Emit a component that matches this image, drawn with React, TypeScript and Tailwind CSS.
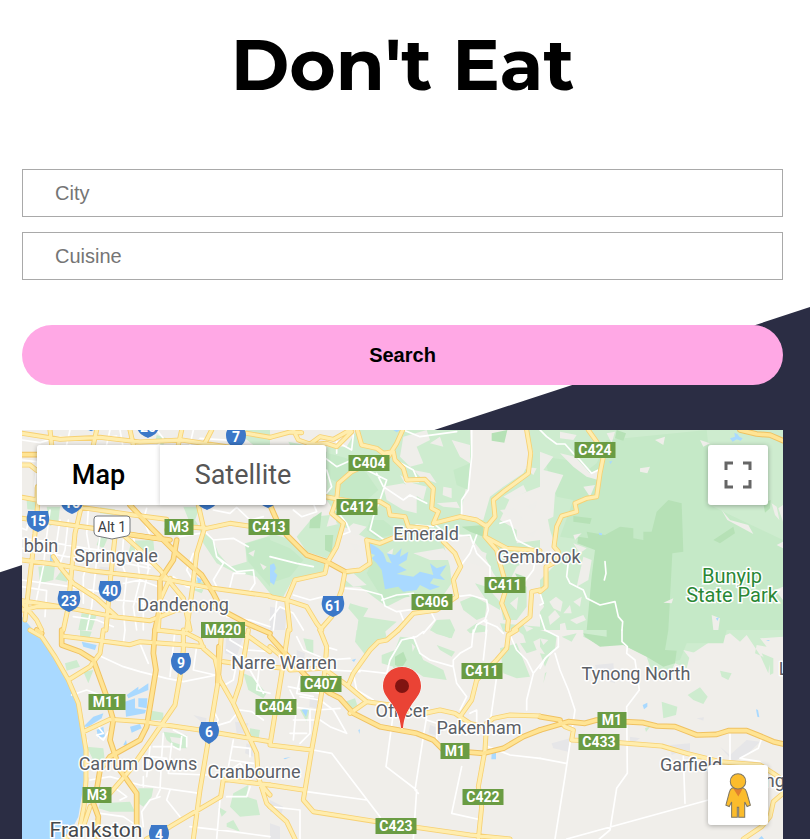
import React from "react";

/* Each sheet covers a 270px wide piece of the map, drawn at three units per pixel. */
type Sheet = {
  x: number;
  y: number;
  park: string[];
  wood: string[];
  dense: string[];
  gaps: string[];
  urban: string[];
  water: string[];
  lanes: string[];
  roads: string[];
  highways: string[];
};

const sheets: Sheet[] = [
  {
    x: 0,
    y: 420,
    park: [
      "M720 30L810 30L810 75L760 75L735 55Z",
      "M600 330L640 360L655 400L690 440L740 425L735 370L800 350L810 345L810 520L770 470L700 455L650 430L610 370Z",
      "M550 260L600 260L585 300L610 340L570 310Z",
      "M140 260L180 260L175 305L150 318Z",
      "M115 440L165 435L160 480L120 490Z",
      "M185 450L215 460L200 485L165 478Z",
      "M395 362L460 360L465 415L420 420L385 400Z",
      "M245 580L290 585L275 630L235 630Z",
      "M300 262L345 268L340 285L300 280Z",
      "M80 240L108 245L105 270L82 268Z",
      "M470 45L500 55L490 74L465 70Z",
      "M590 480L620 490L605 520L580 510Z",
      "M300 345L325 350L310 385L290 375Z",
    ],
    wood: ["M735 372L800 352L810 352L810 500L775 460L745 425Z"],
    dense: [],
    gaps: ["M745 400L765 390L760 410Z", "M780 430L800 440L790 450Z"],
    urban: ["M300 440L350 445L345 470L290 465Z", "M370 300L390 320L380 335Z"],
    water: ["M66 590L100 630L66 630Z", "M150 400L158 405L158 430L150 425Z", "M590 470L606 480L596 496Z", "M262 30L285 30L275 34Z"],
    lanes: [
      "M66 120L110 125L105 200",
      "M66 355L140 365L260 385L370 400",
      "M66 385L200 410L330 420L450 445",
      "M66 480L210 500L300 515",
      "M66 500L140 512L135 590",
      "M150 270L140 350L130 440L105 560",
      "M180 300L165 400L185 450",
      "M205 300L195 390L180 430L210 470",
      "M265 270L260 340L270 400L250 470L250 550",
      "M300 350L290 420L275 560L260 630",
      "M370 360L365 430L380 470L370 560L375 630",
      "M400 350L410 400L420 480L400 560L410 630",
      "M440 380L445 450L430 520L430 630",
      "M300 400L360 410L430 430L470 440",
      "M370 490L420 480L475 500",
      "M350 540L410 545L470 560",
      "M500 300L520 330L540 350L600 340",
      "M610 330L640 360L650 410L690 440L710 455L760 450L765 490L745 520",
      "M640 360L700 355L745 380",
      "M650 410L670 430L640 480L650 500",
      "M690 500L700 460L735 460",
      "M580 400L560 450L590 500",
      "M640 270L690 280L710 262L750 300L790 290",
      "M66 60L120 68L180 50L260 60L350 48",
      "M210 30L200 74M330 30L320 74M360 30L368 74",
      "M470 30L490 55L475 74",
      "M580 30L570 74M600 55L680 60",
      "M680 590L750 600L810 620",
      "M90 280L80 330L66 325",
      "M220 590L290 600L340 620",
      "M520 470L560 500L610 505",
      "M440 265L430 300L450 345",
    ],
    roads: [
      "M66 40L180 58L300 52L420 66L545 60L690 82",
      "M150 30L155 75M290 30L280 75M390 30L400 75",
      "M545 30L535 75M635 30L612 75M740 40L810 52",
      "M66 135L90 135L111 152",
      "M66 232L111 240L112 200",
      "M118 200L105 340L90 470L75 600",
      "M245 255L225 340L215 450L205 560L190 630",
      "M345 350L332 470L318 630",
      "M66 295L280 325L500 360",
      "M240 262L400 285L500 298",
      "M66 420L180 435L270 452L500 478L640 505L810 528",
      "M66 542L230 568L340 590L450 602L530 570L640 560",
      "M160 410L180 440L220 490L290 535L350 590",
      "M345 345L370 345L420 390L480 450L550 535L570 630",
      "M595 255L612 330L590 400L578 500L560 630",
      "M500 330L560 320L620 325L690 310L745 318",
      "M66 548L110 600L125 630",
      "M66 570L110 560L180 560",
      "M510 475L480 540L475 630",
    ],
    highways: [
      "M66 104L111 104",
      "M390 255L455 325L530 400L605 465L640 520L665 570L740 610L810 640",
      "M530 360L520 420L480 480L480 560L465 630",
      "M395 345L510 360",
    ],
  },
  {
    x: 270,
    y: 420,
    park: [
      "M55 65L130 80L230 80L260 30L600 30L605 120L570 290L640 300L660 230L700 200L760 160L790 100L770 30L810 30L810 200L720 235L690 300L740 330L740 370L810 360L810 400L740 440L720 480L770 500L770 560L740 600L700 600L690 550L700 500L670 460L640 400L600 350L560 340L520 370L540 440L545 490L510 540L430 520L350 560L270 500L225 500L225 460L290 440L300 360L200 310L190 270L170 240L170 75L60 75Z",
      "M0 340L50 355L105 410L165 430L160 455L70 475L40 530L0 525Z",
      "M170 320L215 310L195 380L170 415L110 395L80 350L130 290L180 285Z",
      "M130 90L200 100L240 160L200 190L170 180Z",
      "M240 550L275 560L295 565L280 590L380 605L340 640L260 638L265 600L235 565Z",
      "M500 600L540 598L555 630L540 655L480 630Z",
      "M570 545L610 528L650 550L645 590L620 600L580 570Z",
      "M615 490L650 500L690 545L690 570L655 550Z",
    ],
    wood: [
      "M175 100L230 115L290 160L325 210L290 240L225 240L200 220L205 190L170 170Z",
      "M0 360L60 385L100 420L60 470L0 490Z",
      "M300 300L340 300L390 340L320 355L290 330Z",
      "M550 150L600 130L595 210L560 195Z",
      "M320 400L290 460L340 540L420 530L370 480Z",
    ],
    dense: [
      "M665 40L712 30L703 68L665 62Z",
      "M120 300L155 275L150 325L118 325Z",
      "M165 345L190 345L185 400L165 390Z",
      "M575 320L640 315L640 350L600 335Z",
      "M735 460L765 470L750 490Z",
    ],
    gaps: [
      "M400 50L470 30L480 60L440 80L460 130L420 140L390 110Z",
      "M480 70L510 50L520 80Z",
      "M545 60L600 75L600 130L570 110Z",
      "M430 150L480 160L500 190L450 170Z",
      "M520 200L545 205L545 235L518 225Z",
      "M500 250L560 245L570 265L520 260Z",
      "M340 200L400 190L440 215L440 280L400 270L350 240Z",
      "M240 370L270 375L260 400Z",
      "M225 330L250 310L290 320L260 350Z",
      "M690 270L735 265L760 300L720 300Z",
      "M700 230L760 195L770 215L720 240Z",
      "M770 260L805 240L790 275Z",
      "M770 345L800 330L790 350Z",
      "M600 380L650 400L640 440L600 430Z",
      "M430 400L520 385L550 420L480 420Z",
      "M740 400L790 420L750 440Z",
      "M350 400L370 385L365 415Z",
      "M215 470L250 500L290 495L250 460Z",
      "M760 140L800 145L790 165Z",
      "M325 110L345 130L335 150Z",
      "M390 165L430 190L470 200L460 240L420 215Z",
      "M720 550L745 530L740 570Z",
    ],
    urban: ["M0 560L50 570L45 630L0 630Z"],
    water: [
      "M300 370L325 385L340 400L350 425L365 430L350 400L375 405L395 385L390 410L415 395L410 420L385 435L410 450L380 462L430 470L450 455L490 465L480 430L500 445L530 435L510 465L525 480L490 475L480 490L510 500L480 510L450 495L440 510L400 515L385 500L345 508L335 450L320 430L305 415L315 405L300 400Z",
      "M0 435L12 430L18 445L12 455L22 465L12 495L0 485Z",
      "M370 30L390 30L380 37Z",
    ],
    lanes: [
      "M375 120L430 150L445 185L405 185",
      "M605 30L605 110L595 210L575 240L575 290",
      "M320 160L340 200L400 240L420 225L470 250",
      "M250 45L245 90L200 65L200 100",
      "M250 110L290 150L350 180L330 240L310 290L300 330L350 365",
      "M110 70L160 110L200 140L245 120",
      "M170 150L185 200L170 220",
      "M490 310L540 350L600 345L620 400L660 440L660 480",
      "M570 440L600 400L620 345",
      "M690 310L720 300L740 360L810 395",
      "M225 505L280 510L335 525L345 558L380 575L450 565",
      "M335 540L380 525L430 520",
      "M390 575L400 600M480 570L495 600L460 640",
      "M560 530L600 525L650 540L655 570L645 600L620 615L610 640",
      "M645 605L680 620L700 640M650 600L648 640",
      "M70 270L95 290L140 275L130 250",
      "M0 410L80 430L130 440",
      "M70 525L120 540L160 530",
      "M0 600L30 560L70 580L100 630",
      "M20 545L10 630",
      "M395 330L440 315L490 320",
      "M720 500L760 490L790 450L800 400",
      "M190 260L230 310L240 335L215 345",
      "M400 30L450 50L560 35",
    ],
    roads: [
      "M0 52L60 36L95 38",
      "M70 30L85 60L120 72L150 50L190 58L240 30",
      "M115 75L170 70L200 80L245 35",
      "M262 30L275 75L320 85L340 100L370 95L375 120L400 145L410 180L465 178L490 205L485 265L505 275L490 310",
      "M398 30L380 70L355 110L300 130L245 155L205 190L200 240L185 280L220 310L200 380L172 428L165 460L75 480L50 540L60 630",
      "M165 230L250 245L330 245L355 260L360 285L405 290L415 320L470 325",
      "M225 455L270 450L300 430L290 360L330 370L390 345",
      "M225 455L215 510L185 590L150 630",
      "M0 530L50 540L110 560L140 610L155 630",
      "M490 310L570 290L620 300L650 320L675 290L670 240L700 215L775 160L782 100L770 30",
      "M650 315L645 350L680 390L690 430L710 500L695 550L715 600L712 630",
      "M645 350L710 385L810 392",
      "M520 365L555 400L572 440L550 480L560 530L500 570L430 580L385 630",
      "M810 510L785 515L780 590L730 630",
    ],
    highways: ["M0 255L20 300L50 345L110 405L170 425L225 455"],
  },
  {
    x: 540,
    y: 420,
    park: ["M0 30L729 30L729 630L0 630L0 480L60 420L30 330L0 180Z"],
    wood: [
      "M10 110L80 120L130 160L170 130L200 60L500 30L510 120L500 250L560 280L729 360L729 630L380 630L380 380L200 420L130 360L60 350L100 240L50 230Z",
      "M180 180L280 180L290 230L180 240Z",
    ],
    dense: [
      "M165 390L112 370L115 350L145 355L140 335L195 345L240 320L280 325L280 355L310 360L310 335L335 335L350 275L385 240L425 250L430 395L397 400L385 630L140 630L155 470Z",
      "M100 288L155 295L150 312L100 305Z",
      "M230 30L258 40L250 62L225 55Z",
      "M520 360L580 320L585 340L540 370Z",
      "M670 250L692 240L690 265L675 278Z",
    ],
    gaps: [
      "M0 95L40 110L10 150L70 165L45 220L40 290L20 300L40 380L0 400Z",
      "M60 100L105 110L150 160L175 150L175 180L140 170L100 140Z",
      "M60 35L110 45L100 60L60 55Z",
      "M200 40L225 35L215 70Z",
      "M130 200L165 195L150 230Z",
      "M300 145L330 140L322 160L300 155Z",
      "M345 60L375 50L370 75Z",
      "M545 270L570 300L625 315L640 342L590 315L562 300Z",
      "M695 250L710 260L718 300L705 285Z",
      "M715 265L729 255L729 305Z",
      "M370 548L400 535L395 550Z",
      "M515 585L540 595L535 630L520 630Z",
      "M705 510L729 500L729 540Z",
      "M100 370L140 385L120 400Z",
      "M130 410L155 420L145 480L110 500Z",
      "M710 375L729 365L729 385Z",
      "M480 60L510 70L490 80Z",
      "M100 345L125 340L105 360Z",
      "M0 525L12 560L0 575Z",
      "M28 545L48 530L68 545L62 575L40 565Z",
      "M25 590L45 570L60 590L30 615Z",
      "M70 580L90 555L95 580Z",
      "M90 600L130 585L138 600L110 612Z",
      "M60 612L75 608L80 630L60 630Z",
      "M100 545L125 530L120 560Z",
    ],
    urban: [],
    water: ["M570 55L585 50L583 38L592 42L598 50L608 55L602 62L590 58L578 65Z", "M176 338L186 340L186 346L178 345Z", "M207 125L217 122L212 132Z", "M528 595L537 592L532 603Z"],
    lanes: [
      "M0 30L20 50L50 72L75 72L100 100L120 120L155 160L175 150",
      "M85 425L80 470L90 490L130 510L140 535L180 555L225 545L235 590L248 605L246 630",
      "M0 520L10 550L0 555",
      "M0 585L15 630",
      "M195 425L198 460L193 480",
    ],
    roads: [
      "M145 30L170 65L190 110L180 160L170 230L140 235L105 250L110 275L65 288L50 320L42 380L55 395L40 430L18 440L18 500L0 515",
    ],
    highways: ["M600 30L650 42L690 45L729 62"],
  },
  {
    x: 0,
    y: 630,
    park: [
      "M260 350L310 355L315 395L280 390Z",
      "M415 475L460 475L455 500L430 530L415 520Z",
      "M300 520L390 515L405 545L330 545L295 535Z",
      "M195 100L230 90L240 110L200 122Z",
      "M250 125L280 120L265 160Z",
      "M490 305L560 315L560 355L530 355L500 330Z",
      "M700 490L745 465L740 500L770 510L780 555L720 560L690 530Z",
      "M655 530L680 545L665 560Z",
      "M730 130L755 140L800 190L790 205L745 180Z",
      "M455 242L490 248L490 270L450 270Z",
      "M750 295L780 300L775 330L750 330Z",
      "M240 0L275 5L265 35L240 25Z",
      "M680 580L700 570L720 605L680 590Z",
    ],
    wood: [],
    dense: [],
    gaps: ["M510 320L545 325L545 345L515 335Z"],
    urban: ["M705 275L745 280L735 310L710 310Z", "M680 5L730 20L710 80L675 70Z", "M740 340L760 350L760 380L735 370Z", "M580 255L620 265L615 285Z"],
    water: [
      "M66 0L90 0L125 30L165 90L205 160L230 220L245 300L252 360L256 430L245 500L235 560L200 627L66 627Z",
      "M380 195L415 170L415 180L445 160L445 180L385 205Z",
      "M375 215L405 205L405 235L438 240L435 250L378 260Z",
      "M415 205L442 205L440 235L415 230Z",
      "M390 290L420 282L425 295L395 308Z",
      "M250 290L280 260L310 250L305 265L265 290Z",
      "M290 300L310 290L315 320L295 325Z",
      "M370 345L378 330L382 348Z",
      "M245 35L290 45L285 60L250 50Z",
    ],
    lanes: [
      "M375 0L370 40M420 40L445 100",
      "M305 80L370 110L420 125L500 145L550 155L650 135",
      "M525 0L510 140M590 50L580 120L645 135",
      "M215 195L260 180L300 195",
      "M250 305L290 285L310 310L290 315L310 330L325 305",
      "M260 330L265 440M270 450L330 440L420 465L600 490",
      "M490 310L485 380L480 480L470 500",
      "M430 440L430 470M510 480L500 510L540 560",
      "M515 340L505 430L620 435",
      "M460 350L510 350M455 380L500 385M450 350L440 440",
      "M700 330L680 440M700 350L750 355L750 380",
      "M645 250L655 270L640 290L690 275L720 240L755 245L790 270",
      "M665 170L700 150L710 100L750 120L790 190",
      "M690 30L740 60L810 65M680 60L730 90",
      "M695 0L690 30M780 90L770 180L810 190",
      "M660 510L650 627M680 500L740 500L750 470",
      "M570 590L700 605L810 620",
      "M545 320L540 360L520 350",
      "M340 470L380 500L360 510",
      "M300 550L370 560L400 580",
      "M520 300L560 320L560 350M610 440L600 490",
      "M690 390L760 400M690 420L720 400L740 430",
      "M430 590L425 545L450 510L480 500",
    ],
    roads: [
      "M90 0L125 20L165 80L205 150L235 220L248 300L258 360L258 450L252 530L240 590L195 627",
      "M185 18L300 32L390 44L420 35L560 45L610 50",
      "M310 0L300 70L270 110L205 150",
      "M550 0L550 60L540 140L525 225L460 320L390 420L330 490",
      "M250 305L330 268L430 275L600 300L810 335",
      "M665 0L655 150L630 300L600 480L580 627",
      "M470 0L560 10L600 30L610 55L645 85L660 150L700 220L770 370L775 440L800 520L810 530",
      "M745 0L720 160L700 220M670 95L740 105M740 15L810 65",
      "M670 448L810 465M670 448L662 500L510 590L440 627",
      "M270 530L250 590M780 460L810 495",
    ],
    highways: [
      "M110 0L125 10",
      "M185 0L185 45L240 65L280 90L320 200L340 270L330 330L360 420L410 490L410 590",
      "M465 0L460 70L468 120L440 290L420 330L330 380L300 420L290 480L280 520L295 560L290 627",
      "M657 50L654 155",
    ],
  },
  {
    x: 270,
    y: 630,
    park: [
      "M260 0L345 0L350 25L310 50L290 80L255 35Z",
      "M390 20L430 25L460 90L520 120L530 150L460 140L430 120L350 170L370 110L335 100L335 75L375 60Z",
      "M500 45L555 65L545 80L510 60Z",
      "M480 0L555 0L545 25L500 12Z",
      "M590 0L620 -20L650 -10L645 5L600 10Z",
      "M690 55L740 40L780 140L740 145L700 130Z",
      "M225 215L255 205L265 235L240 240Z",
      "M90 240L120 235L110 275Z",
      "M100 25L130 30L130 75L110 60Z",
      "M690 -20L810 -10L810 25L770 45L760 15L735 -5L700 5Z",
      "M750 40L790 35L800 60L770 70Z",
    ],
    wood: [],
    dense: ["M375 80L400 65L410 90L395 115L375 105Z"],
    gaps: ["M425 40L435 50L428 65Z", "M760 -15L790 -5L770 5Z"],
    urban: ["M0 510L40 530L35 550L0 545Z", "M0 580L30 590L30 627L0 627Z", "M80 60L105 70L100 100L80 90Z", "M120 200L145 205L140 235L118 230Z", "M480 285L520 300L510 320L475 310Z"],
    water: ["M665 370L678 368L678 388L664 388Z", "M265 300L270 298L268 312Z", "M95 240L115 235L108 260Z", "M40 385L62 381L45 388Z", "M245 90L258 86L252 96Z"],
    lanes: [
      "M460 5L440 20L395 30L360 90L350 130L260 120",
      "M430 20L450 70L480 90L550 110",
      "M370 250L348 410L440 480L430 627",
      "M460 320L435 480L445 490",
      "M130 360L185 370L330 560L335 600M110 485L290 510",
      "M575 410L545 550L635 570M655 350L720 375L810 385",
      "M610 0L605 50L570 70L550 90L550 110L560 160L590 200L570 240",
      "M680 140L660 280M650 0L640 90",
      "M720 15L740 60L770 90L790 130L770 210L770 240M790 130L830 80L865 50",
      "M60 180L80 220L70 330M90 200L150 210L190 240L230 310",
      "M60 230L140 240L210 235M70 270L150 270L180 290L230 310",
      "M80 20L100 60L150 80M170 90L240 85M165 50L200 60",
      "M180 120L270 125M90 140L80 190L130 200",
      "M55 170L150 190M120 240L120 310L90 340M60 310L110 310",
      "M0 530L90 540L90 627M440 250L470 260L460 320",
      "M250 130L260 180L310 210",
      "M470 270L500 280L500 330M600 250L620 240L620 290",
    ],
    roads: [
      "M55 0L35 130L0 345L125 360M0 465L100 480M0 530L50 575L75 627",
      "M150 0L170 50L165 120L150 220L125 360L100 510L130 545L320 575L600 615L720 627",
      "M160 115L230 165L290 215L360 225L440 255L510 240L555 250L600 280L640 290L670 265L720 255L810 258",
      "M290 215L240 250",
      "M235 165L250 130L300 60L325 35L350 30L385 0",
      "M740 0L715 15L710 55L680 90L620 150L605 210L570 260",
      "M650 280L645 360L625 470L635 530L625 627",
      "M0 50L30 75L60 120L160 115M0 110L40 115",
    ],
    highways: ["M0 20L50 75L110 140L180 190L210 205L250 250L330 290L440 310L490 330L520 360L640 370L700 355L760 320L810 300"],
  },
  {
    x: 540,
    y: 630,
    park: [
      "M130 0L729 0L729 20L660 25L680 50L650 45L645 70L690 90L685 130L660 75L620 15L600 35L570 10L510 35L450 75L440 115L405 100L380 150L340 150L330 110L320 80L250 45L180 45L130 20Z",
      "M0 0L50 15L45 60L20 80L0 50Z",
      "M665 70L700 85L700 130L690 135L688 95L670 80Z",
      "M0 70L30 75L15 110Z",
      "M65 20L110 10L95 35Z",
      "M365 215L412 230L408 255L370 265Z",
      "M443 195L480 172L503 200L490 222L460 210Z",
      "M540 122L575 130L565 150L545 140Z",
      "M20 125L10 160L15 130Z",
      "M315 295L332 288L318 306Z",
    ],
    wood: ["M375 0L560 0L550 40L440 40L420 90L370 100Z"],
    dense: ["M130 10L200 20L200 0L385 0L375 60L410 62L405 100L370 110L320 80L250 45L180 50L135 20Z"],
    gaps: ["M430 60L470 70L460 100Z", "M0 25L25 30L10 45Z"],
    urban: [
      "M35 340L90 325L85 365L40 355Z",
      "M540 350L570 375L620 330L660 335L620 375L580 395Z",
      "M390 345L450 340L450 375L420 365L395 375Z",
      "M270 320L300 325L270 345Z",
      "M470 265L492 262L490 272Z",
      "M165 105L220 100L225 160L180 145Z",
    ],
    water: ["M308 225L322 218L322 230L312 238Z", "M648 238L654 240L658 262L652 260Z", "M655 627L665 618L672 627Z", "M678 30L690 30L685 33Z"],
    lanes: [
      "M15 0L55 20L55 50L15 85L0 115",
      "M45 70L60 120L85 180L105 240L90 340L75 440L45 627",
      "M246 0L246 35L262 50L260 70L285 90L298 180L260 230L262 430L230 475L210 600L178 627",
      "M0 385L78 400M80 627L505 510M430 380L435 520",
      "M570 310L570 390M665 325L655 355L600 385L660 395",
    ],
    roads: [
      "M60 275L75 290L100 300L95 330L200 335L365 348L440 370L540 395L660 405L700 430L729 450",
      "M729 490L700 515L690 560L665 590L610 627",
    ],
    highways: [
      "M0 260L60 270M0 300L85 275L135 280L170 270L250 275L310 278L350 288L405 290L470 315L530 313L565 302L620 302L660 318L700 335L729 342",
    ],
  },
];

const routes: [string, number, number][] = [
  ["C424", 595, 450],
  ["C404", 369, 463],
  ["C412", 357, 507],
  ["M3", 179, 527],
  ["C413", 269, 527],
  ["C411", 505, 585],
  ["C406", 432, 602],
  ["M420", 223, 630],
  ["C411", 482, 671],
  ["C407", 321, 684],
  ["M11", 107, 702],
  ["C404", 276, 707],
  ["M1", 612, 720],
  ["C433", 599, 742],
  ["M1", 455, 751],
  ["M3", 97, 795],
  ["C422", 483, 797],
  ["C423", 396, 826],
];

const shields: [string, number, number][] = [
  ["7", 236, 438],
  ["20", 148, 428],
  ["", 91, 421],
  ["16", 72, 504],
  ["", 207, 500],
  ["", 268, 498],
  ["15", 38, 522],
  ["40", 110, 592],
  ["23", 69, 602],
  ["61", 333, 607],
  ["9", 181, 664],
  ["6", 209, 733],
  ["4", 159, 836],
];

const places: [string, number, number][] = [
  ["bbin", 41, 552],
  ["Springvale", 116, 562],
  ["Dandenong", 183, 611],
  ["Emerald", 426, 540],
  ["Gembrook", 539, 563],
  ["Narre Warren", 284, 669],
  ["Officer", 402, 717],
  ["Pakenham", 479, 734],
  ["Tynong North", 636, 680],
  ["Garfield", 691, 771],
  ["Carrum Downs", 138, 770],
  ["Cranbourne", 254, 778],
  ["Labertouche", 829, 675],
  ["Longwarry", 787, 787],
];

type ShapeLayer = "park" | "wood" | "dense" | "gaps" | "urban" | "water" | "lanes" | "roads" | "highways";

function Layer({ kind, className }: { kind: ShapeLayer; className: string }) {
  return (
    <g className={className} strokeLinejoin="round" strokeLinecap="round">
      {sheets.map((s) => (
        <path key={`${s.x}-${s.y}`} d={s[kind].join("")} transform={`translate(${s.x} ${s.y}) scale(${1 / 3})`} />
      ))}
    </g>
  );
}

function MapDrawing() {
  return (
    <svg
      viewBox="22 430 761 409"
      preserveAspectRatio="xMidYMin slice"
      className="block size-full font-[Roboto,sans-serif]"
      role="img"
      aria-label="Map of the area around Officer"
    >
      <rect x="22" y="430" width="761" height="409" className="fill-[#f0eeea]" />
      <Layer kind="park" className="fill-[#ceeccf]" />
      <Layer kind="wood" className="fill-[#c5e9c7]" />
      <Layer kind="dense" className="fill-[#b6e1b6]" />
      <Layer kind="gaps" className="fill-[#efeeea]" />
      <Layer kind="urban" className="fill-[#e6e6e8]" />
      <Layer kind="water" className="fill-[#a9d9ff]" />
      <Layer kind="lanes" className="fill-none stroke-white stroke-[5px]" />
      <Layer kind="roads" className="fill-none stroke-[#f7d173] stroke-[15px]" />
      <Layer kind="highways" className="fill-none stroke-[#f0c262] stroke-[17px]" />
      <Layer kind="roads" className="fill-none stroke-[#ffedae] stroke-[10px]" />
      <Layer kind="highways" className="fill-none stroke-[#ffe494] stroke-[11px]" />

      <g className="fill-[#5b6066] stroke-white stroke-[3px] text-[18px] [paint-order:stroke]" textAnchor="middle" strokeLinejoin="round">
        {places.map(([name, x, y]) => (
          <text key={name} x={x} y={y}>
            {name}
          </text>
        ))}
      </g>
      <text x="96" y="837" textAnchor="middle" className="fill-[#45494d] stroke-white stroke-[3px] text-[21px] [paint-order:stroke]">
        Frankston
      </text>
      <g className="fill-[#2a8735] stroke-white stroke-[3px] text-[20px] [paint-order:stroke]" textAnchor="middle">
        <text x="732" y="583">
          Bunyip
        </text>
        <text x="732" y="602">
          State Park
        </text>
      </g>

      {shields.map(([name, x, y]) => (
        <g key={`${name}-${x}`} transform={`translate(${x} ${y})`}>
          <path
            d={
              name.length === 1
                ? "M-8 -11H8C8 -8 10 -7 10 -3C10 5 5 8 0 11C-5 8 -10 5 -10 -3C-10 -7 -8 -8 -8 -11Z"
                : "M-10 -11H10C10 -8 12 -5 11 -1C10 6 4 8 0 10C-4 8 -10 6 -11 -1C-12 -5 -10 -8 -10 -11Z"
            }
            className="fill-[#3c78c8]"
          />
          <text y="4" textAnchor="middle" className="fill-white text-[14px] font-bold">
            {name}
          </text>
        </g>
      ))}
      {routes.map(([name, x, y]) => {
        const w = name.length === 4 ? (name[0] === "M" ? 44 : 41) : name.length === 3 ? 37 : 29;
        return (
          <g key={`${name}-${x}`}>
            <rect x={x - w / 2} y={y - 8} width={w} height="16" className="fill-[#6a9c43]" />
            <text x={x} y={y + 5} textAnchor="middle" className="fill-white text-[14px] font-bold">
              {name}
            </text>
          </g>
        );
      })}
      <path
        d="M97 516H127Q130 516 130 519V532Q130 535 127 536L112 539L97 536Q94 535 94 532V519Q94 516 97 516Z"
        className="fill-white stroke-[#75787c] stroke-[1px]"
      />
      <text x="112" y="532" textAnchor="middle" className="fill-[#3c4043] text-[14px]">
        Alt 1
      </text>

      <path
        d="M403 728H401C400 718 398 713 392 704C387 697 383 693 383 686C383 675 391 667 402 667C413 667 421 675 421 686C421 693 417 697 412 704C406 713 404 718 403 728Z"
        className="fill-[#ea4335] stroke-white stroke-1 [paint-order:stroke]"
      />
      <circle cx="402" cy="686" r="7" className="fill-[#811411]" />
    </svg>
  );
}

function Field({ id, label }: { id: string; label: string }) {
  return (
    <div>
      <label htmlFor={id} className="sr-only">
        {label}
      </label>
      <input
        id={id}
        type="text"
        placeholder={label}
        className="block h-12 w-full border border-[#a9a9a9] bg-white px-8 text-[20px] placeholder:text-[#757575]"
      />
    </div>
  );
}

export default function App() {
  return (
    <div className="relative isolate flex min-h-screen flex-col bg-white pr-[27px] pl-[22px] font-['Liberation_Sans',Arial,sans-serif]">
      <div className="absolute inset-0 -z-10 bg-[#2b2d44] [clip-path:polygon(0_68.2%,100%_36.6%,100%_100%,0_100%)]" />

      <h1 className="pt-[23px] text-center font-[Montserrat,Inter,sans-serif] text-[71px] leading-[84px] font-bold text-black">
        Don't Eat
      </h1>

      <form className="mt-[62px]" onSubmit={(e) => e.preventDefault()}>
        <div className="flex flex-col gap-[15px]">
          <Field id="city" label="City" />
          <Field id="cuisine" label="Cuisine" />
        </div>
        <button type="submit" className="mt-[45px] h-[60px] w-full rounded-full bg-[#ffa8e5] text-[20px] font-bold text-black">
          Search
        </button>
      </form>

      <section className="relative mt-[45px] min-h-[320px] flex-1 basis-0 overflow-hidden font-[Roboto,sans-serif]">
        <div className="absolute inset-0">
          <MapDrawing />
        </div>
        <div className="absolute top-[15px] left-[15px] flex rounded-[3px] text-[27px] shadow-[0_1px_5px_rgba(0,0,0,0.3)]">
          <button type="button" className="h-[60px] w-[123px] rounded-l-[3px] bg-white font-medium text-black">
            Map
          </button>
          <button
            type="button"
            className="h-[60px] w-[166px] rounded-r-[3px] bg-white text-[#565656] shadow-[-1px_0_4px_rgba(0,0,0,0.15)]"
          >
            Satellite
          </button>
        </div>
        <button
          type="button"
          aria-label="Toggle fullscreen view"
          className="absolute top-[15px] right-[15px] flex size-[60px] items-center justify-center rounded-[3px] bg-white shadow-[0_1px_5px_rgba(0,0,0,0.3)]"
        >
          <svg viewBox="0 0 28 28" className="size-[28px] fill-none stroke-[#666666] stroke-[3px]">
            <path d="M2 9V2H9M19 2H26V9M26 19V26H19M9 26H2V19" />
          </svg>
        </button>
        <button
          type="button"
          aria-label="Drag Pegman onto the map to open Street View"
          className="absolute right-[15px] bottom-[14px] flex size-[60px] items-center justify-center rounded-[3px] bg-white shadow-[0_1px_5px_rgba(0,0,0,0.3)]"
        >
          <svg viewBox="0 0 76 134" className="h-[45px] w-[26px]">
            <path
              d="M20 45L54 45Q62 48 64 58L75 96L65 100L58 86L58 132L40 132L40 102L36 102L36 132L19 132L19 86L12 100L2 96L12 58Q14 48 20 45Z"
              className="fill-[#fbbc2c] stroke-[#7c7563] stroke-[3px]"
            />
            <path d="M24 46L52 46L39 70Z" className="fill-[#e07f2f]" />
            <circle cx="38" cy="25" r="23" className="fill-[#fbbc2c] stroke-[#7c7563] stroke-[3px]" />
          </svg>
        </button>
      </section>
    </div>
  );
}
